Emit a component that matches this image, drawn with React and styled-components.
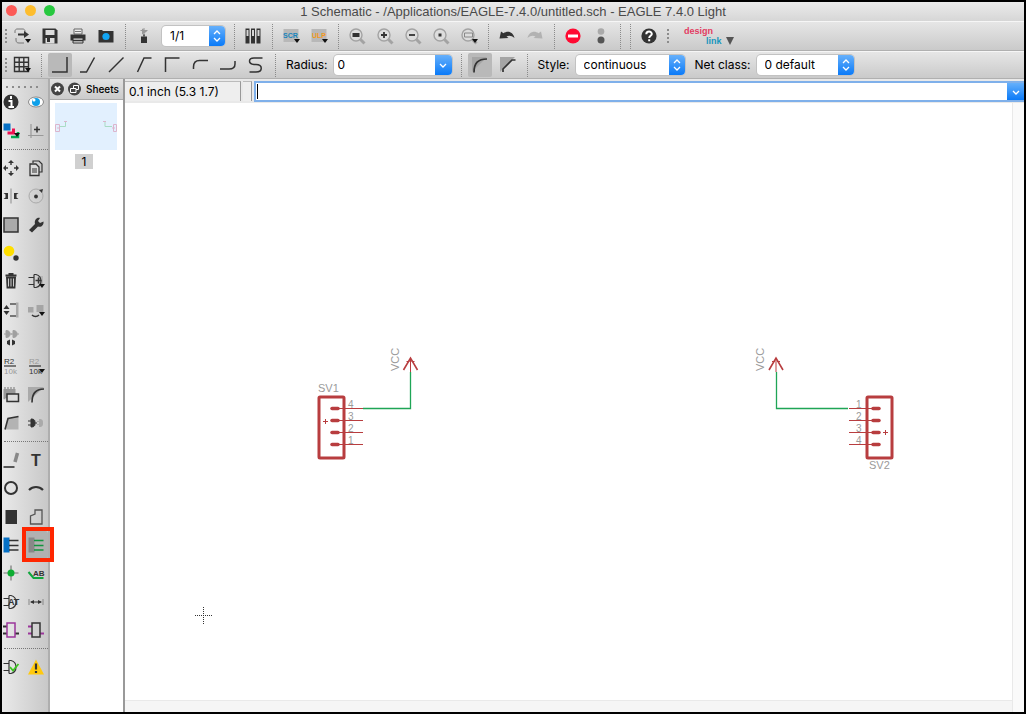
import React from "react";
import styled, { createGlobalStyle } from "styled-components";

const GlobalStyle = createGlobalStyle`
  *, *::before, *::after { box-sizing: border-box; }
  body { margin: 0; }
  button, input, select { font: inherit; color: inherit; }
`;

const ink = "#333";
const pale = "#a3a3a3";

/* ---------- frame ---------- */

const Window = styled.div`
  display: flex;
  flex-direction: column;
  height: 100vh;
  border: 2px solid #000;
  background: #fff;
  color: #000;
  font: 12px/16px Inter, "Liberation Sans", sans-serif;
  overflow: hidden;
`;

const TitleBar = styled.header`
  position: relative;
  display: flex;
  align-items: center;
  justify-content: center;
  flex: none;
  height: 19px;
  background: linear-gradient(#ebebeb, #d6d6d6);
`;

const Lights = styled.div`
  position: absolute;
  left: 4px;
  top: 3px;
  display: flex;
  gap: 8px;
`;

const Light = styled.button`
  width: 11px;
  height: 11px;
  padding: 0;
  border: 0;
  border-radius: 50%;
  background: ${(p) => p.$color};
`;

const Title = styled.h1`
  margin: 0;
  font-family: "Liberation Sans", sans-serif;
  font-size: 13px;
  line-height: 16px;
  font-weight: 400;
  color: #4a4a4a;
  white-space: nowrap;
`;

const Toolbar = styled.div`
  display: flex;
  align-items: center;
  flex: none;
  height: ${(p) => p.$height}px;
  border-top: 1px solid #f6f6f6;
  border-bottom: 1px solid #b0b0b0;
  background: linear-gradient(#e6e6e6, #cacaca);
`;

const Grip = styled.span`
  flex: none;
  width: 2px;
  height: 14px;
  margin: 0 ${(p) => p.$after}px 0 ${(p) => p.$before}px;
  background: repeating-linear-gradient(#8c8c8c 0 2px, transparent 2px 4px);
`;

const Divider = styled.span`
  flex: none;
  align-self: stretch;
  width: 1px;
  margin: 2px 4px 1px 5px;
  border-left: 1px dotted #8a8a8a;
`;

const ToolButton = styled.button`
  display: flex;
  align-items: center;
  justify-content: center;
  flex: none;
  width: 24px;
  height: 24px;
  margin: 0 2px;
  padding: 0;
  border: 0;
  border-radius: 2px;
  background: ${(p) => (p.$active ? "#b9b9b9" : "transparent")};
`;

const Field = styled.div`
  display: flex;
  flex: none;
  width: ${(p) => p.$width}px;
  height: 20px;
  margin: 0 4px;
  border-radius: 4px;
  overflow: hidden;
  background: #fff;
  box-shadow: 0 0 0 1px #c2c2c2;
`;

const Select = styled.select`
  appearance: none;
  flex: 1;
  min-width: 0;
  padding: 0 8px;
  border: 0;
  outline: 0;
  background: transparent;
`;

const TextInput = styled.input`
  flex: 1;
  min-width: 0;
  padding: 0 4px;
  border: 0;
  outline: 0;
  background: transparent;
`;

const Stepper = styled.span`
  display: flex;
  align-items: center;
  justify-content: center;
  flex: none;
  width: 16px;
  background: linear-gradient(#66b0fb, #0a7af8);
  pointer-events: none;
`;

const DropButton = styled.button`
  display: flex;
  align-items: center;
  justify-content: center;
  flex: none;
  width: 17px;
  padding: 0;
  border: 0;
  background: linear-gradient(#66b0fb, #0a7af8);
`;

const Label = styled.label`
  margin: 0 2px 0 6px;
  white-space: nowrap;
`;

const LogoLink = styled.a`
  display: flex;
  align-items: center;
  margin-left: 10px;
`;

/* ---------- body ---------- */

const Body = styled.div`
  display: flex;
  flex: 1;
  min-height: 0;
`;

const Palette = styled.nav`
  display: flex;
  flex-direction: column;
  flex: none;
  width: 48px;
  border-right: 2px solid #aeaeae;
  background: linear-gradient(90deg, #e9e9e9, #c8c8c8);
`;

const PaletteGrip = styled.span`
  height: 2px;
  margin: 7px 6px 0 4px;
  background: repeating-linear-gradient(90deg, #8c8c8c 0 2px, transparent 2px 6px);
`;

const PaletteRule = styled.hr`
  width: 44px;
  margin: 4px 0 4px 2px;
  border: 0;
  border-top: 1px dotted #777;
`;

const PaletteGroup = styled.div`
  display: grid;
  grid-template-columns: 18px 24px;
  grid-auto-rows: 1fr;
  column-gap: 4px;
  flex: none;
  height: ${(p) => p.$height}px;
`;

const PaletteButton = styled.button`
  position: relative;
  display: flex;
  align-items: center;
  justify-content: center;
  padding: 0;
  border: 0;
  border-radius: 3px;
  background: ${(p) => (p.$active ? "#b1b1b1" : "transparent")};
`;

const Highlight = styled.span`
  position: absolute;
  z-index: 2;
  inset: -4px -6px -3px -2px;
  border: 4px solid #ff2600;
`;

const Sheets = styled.aside`
  display: flex;
  flex-direction: column;
  flex: none;
  width: 75px;
  border-right: 2px solid #999;
  background: #fff;
`;

const SheetsHeader = styled.div`
  display: flex;
  align-items: center;
  gap: 3px;
  height: 21px;
  border-bottom: 1px solid #aaa;
  background: linear-gradient(#e2e2e2, #cbcbcb);
`;

const SheetsTitle = styled.h2`
  margin: 0 0 0 2px;
  font-size: 10px;
  line-height: 16px;
  font-weight: 500;
`;

const RoundButton = styled.button`
  display: flex;
  padding: 0;
  border: 0;
  background: transparent;
`;

const SheetItem = styled.button`
  display: flex;
  flex-direction: column;
  align-items: center;
  gap: 4px;
  margin: 3px 6px 0 5px;
  padding: 0;
  border: 0;
  background: transparent;
`;

const Thumb = styled.svg`
  display: block;
  width: 100%;
  height: 47px;
  background: #e2f0fe;
`;

const SheetNumber = styled.span`
  width: 18px;
  margin-right: 4px;
  background: #d0d0d0;
  line-height: 15px;
`;

const Main = styled.main`
  display: flex;
  flex-direction: column;
  flex: 1;
  min-width: 0;
`;

const CommandRow = styled.div`
  display: flex;
  flex: none;
  height: 24px;
  padding-top: 2px;
  background: #e9e9e9;
`;

const Coordinates = styled.output`
  width: ${(p) => p.$width}px;
  height: 20px;
  margin-right: 2px;
  padding: 2px 4px 0;
  border-top: 1px solid #bbb;
  border-right: 1px solid #999;
  background: #eee;
  white-space: nowrap;
`;

const CommandBox = styled.div`
  display: flex;
  flex: 1;
  min-width: 0;
  height: 21px;
  border: 2px solid #7fb0ea;
  border-right: 0;
  background: #fff;
`;

const Caret = styled.span`
  width: 1px;
  height: 15px;
  margin: 1px 0 0 1px;
  background: #000;
`;

const CanvasArea = styled.div`
  display: grid;
  grid-template-columns: 1fr 12px;
  grid-template-rows: 1fr 12px;
  flex: 1;
  min-height: 0;
`;

const Sheet = styled.svg`
  display: block;
  width: 100%;
  height: 100%;
  min-height: 0;
  background: #fff;
`;

const ScrollTrack = styled.div`
  border: 0 solid #e9e9e9;
  border-width: ${(p) => (p.$side ? "0 0 0 1px" : "1px 0 0")};
  background: ${(p) => (p.$side ? "#fafafa" : "#f5f5f5")};
`;

/* ---------- icons ---------- */

const Svg = ({ children, size = 18 }) => (
  <svg width={size} height={size} viewBox="0 0 18 18" fill="none" stroke={ink} strokeWidth="1.5" aria-hidden="true">
    {children}
  </svg>
);

const Tri = ({ x = 14, y = 14 }) => <path d={`M${x - 3} ${y - 2}h6l-3 4z`} fill="#111" stroke="none" />;

const Glyph = ({ x, y, size = 8, fill = ink, weight = 400, children }) => (
  <text x={x} y={y} fontSize={size} fill={fill} fontWeight={weight} stroke="none" fontFamily="'Liberation Sans', sans-serif">
    {children}
  </text>
);

const Lens = ({ children }) => (
  <>
    <path d="M12.5 12.5l4 4" stroke={pale} strokeWidth="3" />
    <circle cx="8" cy="8" r="6" fill="#ddd" stroke={pale} strokeWidth="1.4" />
    {children}
  </>
);

const Gate = () => <path d="M7 2.500v13M7 2.500h2c4 1 5 4 5 6.500s-1 5.500-5 6.500H7M1.500 5.500h5.500M1.500 12.500h5.500" strokeWidth="1.2" />;

const Plug = ({ x, y, flip, fill }) => (
  <path
    d={flip ? `M${x} ${y - 3.5}v7c3 0 4-1.500 4-3.500s-1-3.500-4-3.500z M${x + 4} ${y}h2 M${x - 2} ${y}h2` : `M${x} ${y - 3.5}v7c3 0 4-1.500 4-3.500s-1-3.500-4-3.500z M${x - 3} ${y - 2}h3 M${x - 3} ${y + 2}h3 M${x + 4} ${y}h2`}
    fill={fill}
    stroke={fill}
    strokeWidth="1"
  />
);

const icons = {
  open: (<><path d="M12 5V4c0-1-1-2-2-2H4C3 2 2 3 2 4v2M3 11v2c0 2 1 3 3 3h5" stroke="#777" strokeWidth="1" /><path d="M5 7.500h7" strokeWidth="2" /><path d="M11 4l5 3.500-5 3.500z" fill={ink} stroke="none" /><Tri x={15} y={14} /></>),
  save: (<><path d="M1.500 1.500h13l2 2v13h-15z" fill={ink} stroke="none" /><path d="M4.500 3h9v5h-9z" fill="#ddd" stroke="none" /><path d="M4.500 11h9v5.500h-9z" fill="#ddd" stroke="none" /><path d="M6 11h3v4H6z" fill={ink} stroke="none" /></>),
  print: (<><path d="M5 2h8v5H5z" fill="#eee" stroke="#666" strokeWidth="1" /><path d="M6 4.500h6" stroke="#777" strokeWidth="1" /><path d="M1.500 7.500h15v6h-15z" fill={ink} stroke="none" /><path d="M4 11h10v5H4z" fill="#ddd" stroke={ink} strokeWidth="1" /><path d="M4 13.500h10" strokeWidth="1.500" /></>),
  camera: (<><path d="M1.500 3h4v1h11v11.500h-15z" fill={ink} stroke="none" /><circle cx="9" cy="9.500" r="3.600" fill="#12a5f4" stroke="none" /></>),
  module: (<><path d="M9 1v7M5.500 3.500h7" stroke="#999" strokeWidth="1" /><path d="M7 1.500l5 3L7 7.500z" fill="#999" stroke="none" /><path d="M6 9.500h6V16H6z" fill={ink} stroke="none" /><path d="M9 7.500v2" /></>),
  library: (<>{[1.5, 7, 12.5].map((x) => (<g key={x}><path d={`M${x} 1.500h4v15h-4z`} fill={ink} stroke="none" /><path d={`M${x + 1} 3h2v6h-2z`} fill="#d5d5d5" stroke="none" /></g>))}</>),
  scr: (<><path d="M1.500 2h15v13h-15z" fill="#b8b8b8" stroke="none" /><Glyph x={1} y={11} size={7} weight={700} fill="#1684bd">SCR</Glyph><Tri x={15} y={14} /></>),
  ulp: (<><path d="M1.500 2h15v13h-15z" fill="#b8b8b8" stroke="none" /><Glyph x={2} y={11} size={7} weight={700} fill="#f49a1c">ULP</Glyph><Tri x={15} y={14} /></>),
  zoomFit: (<Lens><path d="M4.500 6h7v4h-7z" fill={ink} stroke="none" /></Lens>),
  zoomIn: (<Lens><path d="M5 8h6M8 5v6" strokeWidth="1.800" /></Lens>),
  zoomOut: (<Lens><path d="M5 8h6" strokeWidth="1.800" /></Lens>),
  zoomRedraw: (<Lens><path d="M6.500 6.500h3v3h-3z" fill={ink} stroke="none" /></Lens>),
  zoomSelect: (<Lens><path d="M4.500 6h8v4h-8z" stroke="#888" strokeWidth="1" /><Tri x={15} y={14} /></Lens>),
  undo: (<path d="M1.500 11.500L3 4.500l2.500 1.700c4-3 9.500-1.700 11 4.800-3-2.500-5.500-3-8-1.500l2 1.500z" fill={ink} stroke="none" />),
  redo: (<path d="M16.500 11.500L15 4.500l-2.500 1.700C8.500 3.200 3 4.500 1.500 11c3-2.500 5.500-3 8-1.500l-2 1.500z" fill="#b2b2b2" stroke="none" />),
  stop: (<><circle cx="9" cy="9" r="7.600" fill="#ff0a32" stroke="none" /><path d="M4 7.500h10v3H4z" fill="#fff" stroke="none" /></>),
  go: (<><circle cx="9" cy="4.500" r="3.300" fill="#aaa" stroke="none" /><circle cx="9" cy="13" r="3.500" fill="#555" stroke="none" /></>),
  help: (<><circle cx="9" cy="9" r="7.600" fill={ink} stroke="none" /><path d="M6.300 7.200c0-3.600 5.600-3.400 5.500-.2 0 1.800-2.600 1.900-2.600 4M9.200 12.300v2" stroke="#fff" strokeWidth="2" /></>),
  grid: (<><path d="M1.500 1.500h14v14h-14zM1.500 6.200h14M1.500 10.800h14M6.200 1.500v14M10.800 1.500v14" strokeWidth="1.400" /><Tri x={15} y={14} /></>),
  bend0: <path d="M1 16h15V1" />,
  bend1: <path d="M1 16h6.500L15.500 1.500" />,
  bend2: <path d="M2 16L16.500 1.500" />,
  bend3: <path d="M2.500 16L9 2h7.500" />,
  bend4: <path d="M2.500 16V2H16.500" />,
  bend5: <path d="M2.500 13V11c0-4 2-6.500 6-6.500h8.500" />,
  bend6: <path d="M1 13h9c4 0 6-2 6-5V5" />,
  bend7: <path d="M15.500 2H7c-6 0-6 6 0 6.500h2c7 0 7 7.500 0 7.500H2.500" />,
  miterRound: (<><path d="M1 1h15L1 16z" fill="#a5a5a5" stroke="none" /><path d="M3 16.500C3 7 7 3 16 3" strokeWidth="1.700" /></>),
  miterStraight: (<><path d="M1 1h15L1 16z" fill="#a5a5a5" stroke="none" /><path d="M4 16v-3L13 4h3.500" strokeWidth="1.700" /></>),

  info: (<><circle cx="9" cy="9" r="7.500" fill={ink} stroke="none" /><path d="M9 3v3M6.500 8h3v6M6.500 14h5.500" stroke="#fff" strokeWidth="2" /></>),
  show: (<><ellipse cx="9" cy="9" rx="7.500" ry="5" fill="#fff" stroke="#888" strokeWidth="1" /><circle cx="9" cy="9" r="4" fill="#0ea0ea" stroke="none" /><circle cx="7" cy="7" r="1.500" fill="#fff" stroke="none" /></>),
  layers: (<><path d="M1.500 1.500h7v7h-7z" fill="#0570c5" stroke="none" /><path d="M5.500 11h6V6.500" stroke="#ee1050" strokeWidth="3" /><path d="M9 15h7v-5" stroke="#00a850" strokeWidth="2.500" /><Tri x={15} y={13} /></>),
  mark: (<><path d="M4 2v14M1 13.500h15.500" stroke="#999" strokeWidth="1.200" /><path d="M7 7.500h6M10 4.500v6" /></>),
  move: (<g fill={ink} stroke="none"><path d="M9 1l3 3H6zM9 17l3-3H6zM1 9l3-3v6zM17 9l-3-3v6z" /><path d="M8.300 4h1.400v2H8.300zM8.300 12h1.400v2H8.300zM4 8.300h2v1.400H4zM12 8.300h2v1.400h-2z" /></g>),
  copy: (<><path d="M6 4V2h6l3 3v8h-3" strokeWidth="1.200" /><path d="M3 5h6l3 3v8.500H3z" fill="#ddd" strokeWidth="1.300" /><path d="M5 9h5v5H5z" fill="#888" stroke="none" /></>),
  mirror: (<><path d="M9 1.500v15" stroke="#999" strokeWidth="1.200" /><path d="M1.500 6h4.500v6H1.500l2-1.500v-3zM16.500 6H12v6h4.500l-2-1.500v-3z" fill={ink} stroke="none" /></>),
  rotate: (<><circle cx="9" cy="9" r="7" stroke="#aaa" strokeWidth="1" /><circle cx="9" cy="9.500" r="1.900" fill={ink} stroke="none" /><path d="M12 3l4-1-1 4z" fill={ink} stroke="none" /></>),
  group: <path d="M2 2h14v14H2z" fill="#aaa" />,
  change: <path d="M2 14l6-6c-1-4 2-7 5-6l-2 3 2 2 3.500-1.500c.5 4-2.500 6-5.500 5l-6 6z" fill={ink} stroke="none" />,
  paste: (<><circle cx="7" cy="7" r="5.300" fill="#ffdf00" stroke="none" /><circle cx="14" cy="14" r="2.700" fill={ink} stroke="none" /></>),
  trash: (<><path d="M4 4.500h10l-.6 12H4.600z" fill={ink} stroke="none" /><path d="M3.500 3.500h11M6.500 2h5" strokeWidth="1.800" /><path d="M6.500 6.500v8M9 6.500v8M11.500 6.500v8" stroke="#ccc" strokeWidth="1" /></>),
  add: (<><path d="M11 4h5v8h-5z" fill="#b6b6b6" stroke="none" /><Gate /><path d="M8.500 8.500h6M11.500 5.500v6" /><Tri x={15} y={14} /></>),
  pinswap: (<><path d="M14 1.500h2.500v15H14z" fill="#aaa" stroke="none" /><path d="M8 3h6M8 15h6" strokeWidth="2" stroke="#777" /><path d="M4.500 4l3 4h-6zM4.500 14l3-4h-6z" fill={ink} stroke="none" /></>),
  replace: (<><path d="M1 6h5.500v5.500H1zM9.500 4h7v7h-7z" fill="#a5a5a5" stroke="none" /><path d="M5 14c2 2 5 2 7 0" /><Tri x={15} y={13} /></>),
  gateswap: (<><Plug x={4} y={5} flip fill="#a0a0a0" /><Plug x={11} y={5} flip fill="#a0a0a0" /><path d="M8 10.500v6l-3-1.500v-3zM10 10.500v6l3-1.500v-3z" fill={ink} stroke="none" /></>),
  name: (<><Glyph x={2} y={7} size={8}>R2</Glyph><path d="M2 9h12" strokeWidth="1.200" /><Glyph x={2} y={17} size={8} fill="#999">10k</Glyph></>),
  value: (<><Glyph x={2} y={7} size={8} fill="#999">R2</Glyph><path d="M2 9h12" strokeWidth="1.200" /><Glyph x={2} y={17} size={8}>10k</Glyph><Tri x={15} y={14} /></>),
  smash: (<><path d="M1.500 3h12v9h-12z" fill="#999" stroke="none" /><path d="M2 2h11M1.500 12.500h4" stroke="#999" strokeDasharray="2 1" /><path d="M5 8h11.500v7.500H5z" fill="#ddd" /></>),
  miter: (<><path d="M1 1h16L1 16z" fill="#aaa" stroke="none" /><path d="M5 16.500C5 8 8 3 17 3" strokeWidth="1.600" /></>),
  split: (<><path d="M3.500 15.500L6 4.500l10.500-2v13z" fill="#b3b3b3" stroke="none" /><path d="M3 15.500L6 4.500l10.500-2" strokeWidth="1.600" /></>),
  invoke: (<><path d="M4 5v8c4 0 4-2 4-4s0-4-4-4zM1 7h3M1 11h3M8 9h2" fill={ink} strokeWidth="1" /><path d="M12 5v8c4 0 4-2 4-4s0-4-4-4zM10 7h2v1h-2zM10 10h2v1h-2z" fill="#aaa" stroke="none" /></>),
  wire: (<><path d="M1.500 16h11" strokeWidth="1.600" /><path d="M13 11l2.500-9" stroke="#888" strokeWidth="3.500" /></>),
  text: <Glyph x={4} y={15} size={16} weight={700}>T</Glyph>,
  circle: <circle cx="9" cy="9" r="6" strokeWidth="2" />,
  arc: <path d="M2 11c4-4 10-4 14 0" strokeWidth="2.200" />,
  rect: <path d="M3.500 2h11.500v14H3.500z" fill={ink} stroke="none" />,
  polygon: <path d="M3.500 16V8L8 6V2h7v14z" stroke="#555" strokeWidth="1.300" />,
  bus: (<><path d="M1.500 1.500h6v15h-6z" fill="#0570c5" stroke="none" /><path d="M7 4.500h9.500M7 9.500h9.500M7 14h9.500" /></>),
  net: (<><path d="M1.500 1.500h6v15h-6z" fill="#888" stroke="none" /><path d="M7 4.500h9.500M7 9.500h9.500M7 14h9.500" stroke="#12943e" /></>),
  junction: (<><path d="M9 1.500v15M1.500 9h15" stroke="#777" strokeWidth="1.200" /><circle cx="9" cy="9" r="3.500" fill="#0dad32" stroke="none" /></>),
  label: (<><path d="M1.500 8l5 6h10" stroke="#10a73d" strokeWidth="2" /><Glyph x={6} y={12} size={8} weight={700}>AB</Glyph></>),
  attribute: (<><Gate /><Glyph x={6} y={12} size={9} weight={700}>AT</Glyph></>),
  dimension: (<><path d="M2 6v6M16 6v6" stroke="#888" strokeWidth="1" /><path d="M4 9h10" strokeWidth="1" /><path d="M3 9l4-2v4zM15 9l-4-2v4z" fill={ink} stroke="none" /></>),
  device: (<><path d="M1 5.500h4M1 12.500h4M13 12.500h4" strokeWidth="2" /><path d="M5 2h8v14H5z" stroke="#9b369b" /></>),
  frame: (<><path d="M1 5.500h4M1 12.500h4M13 12.500h4" stroke="#9b369b" strokeWidth="2" /><path d="M5 2h8v14H5z" /></>),
  erc: (<><Gate /><path d="M8 9l3 3.500L16.500 6" stroke="#3dc520" strokeWidth="1.800" /></>),
  errors: (<><path d="M9 1.500L17 16.500H1z" fill="#ffc90d" stroke="none" /><path d="M9 5.500v6M9 13v2" strokeWidth="2.200" /></>),
};

const Tool = ({ name, label, active }) => (
  <ToolButton aria-label={label} $active={active}>
    <Svg>{icons[name]}</Svg>
  </ToolButton>
);

const PaletteTool = ({ name, marked }) => (
  <PaletteButton aria-label={name} $active={marked}>
    <Svg>{icons[name]}</Svg>
    {marked && <Highlight />}
  </PaletteButton>
);

const UpDown = () => (
  <svg width="10" height="14" viewBox="0 0 10 14" fill="none" stroke="#fff" strokeWidth="1.300" aria-hidden="true">
    <path d="M2 5l3-3 3 3M2 9l3 3 3-3" />
  </svg>
);

const Down = () => (
  <svg width="10" height="8" viewBox="0 0 10 8" fill="none" stroke="#fff" strokeWidth="1.300" aria-hidden="true">
    <path d="M2 3l3 3 3-3" />
  </svg>
);

const Picker = ({ id, label, width, value }) => (
  <Field $width={width}>
    <Select id={id} aria-label={label} defaultValue={value}>
      <option>{value}</option>
    </Select>
    <Stepper><UpDown /></Stepper>
  </Field>
);

const Logo = () => (
  <svg width="52" height="26" viewBox="0 0 52 26" aria-hidden="true">
    <g fontFamily="'Liberation Sans', sans-serif" fontSize="9" fontWeight="700">
      <text x="1" y="11" fill="#e23b62">design</text>
      <text x="23" y="21" fill="#1795bd">link</text>
    </g>
    <path d="M43 14h8l-4 8z" fill="#555" />
  </svg>
);

/* ---------- schematic ---------- */

const red = "#b83d3f";
const SchemText = ({ children, ...rest }) => (
  <text fill="#9a9a9a" fontFamily="'Liberation Sans', sans-serif" fontSize="11" {...rest}>{children}</text>
);

const Supply = ({ x }) => (
  <g stroke={red} fill="none">
    <path d={`M${x} 269V256`} strokeWidth="1" />
    <path d={`M${x - 7} 267L${x} 255L${x + 7} 267`} strokeWidth="1.600" />
    <path d={`M${x - 4} 258.500h3M${x + 1} 258.500h3`} strokeWidth="1" />
    <SchemText x={0} y={0} stroke="none" transform={`translate(${x - 12} 268) rotate(-90)`}>VCC</SchemText>
  </g>
);

const Connector = ({ x, flip, numbers, plusRow }) => (
  <g>
    <rect x={x} y="294" width="25" height="61" rx="1" fill="none" stroke={red} strokeWidth="3" />
    {numbers.map((n, i) => {
      const y = 305.5 + i * 12;
      return (
        <g key={n}>
          <path d={flip ? `M${x - 18} ${y}h26` : `M${x + 18} ${y}h26`} stroke={red} strokeWidth="1" />
          <path d={flip ? `M${x + 6} ${y}h6` : `M${x + 13} ${y}h6`} stroke={red} strokeWidth="3.500" strokeLinecap="round" />
          <SchemText x={flip ? x - 11 : x + 29} y={y - 1} fontSize={10}>{n}</SchemText>
        </g>
      );
    })}
    <path
      d={flip ? `M${x + 16} ${305.5 + plusRow * 12}h5M${x + 18.5} ${303 + plusRow * 12}v5` : `M${x + 4} ${306.5 + plusRow * 12}h5M${x + 6.5} ${304 + plusRow * 12}v5`}
      stroke={red}
    />
  </g>
);

const Schematic = () => (
  <Sheet role="img" aria-label="Schematic sheet 1">
    <g fill="none" stroke="#1fa556" strokeWidth="1.300">
      <path d="M238 305.500H285.500V269" />
      <path d="M723 305.500H651.500V269" />
    </g>
    <Supply x={285.5} />
    <Supply x={651} />
    <Connector x={194} numbers={[4, 3, 2, 1]} plusRow={1} />
    <Connector x={742} flip numbers={[1, 2, 3, 4]} plusRow={2} />
    <SchemText x={193} y={289}>SV1</SchemText>
    <SchemText x={744} y={366}>SV2</SchemText>
    <path d="M70 512.500h18M78.500 504v18" stroke="#333" strokeWidth="1" strokeDasharray="1 1" />
  </Sheet>
);

const paletteGroups = [
  { height: 57, tools: ["info", "show", "layers", "mark"] },
  { height: 283, tools: ["move", "copy", "mirror", "rotate", "group", "change", "paste", null, "trash", "add", "pinswap", "replace", "gateswap", null, "name", "value", "smash", "miter", "split", "invoke"] },
  { height: 198, tools: ["wire", "text", "circle", "arc", "rect", "polygon", "bus", "net", "junction", "label", "attribute", "dimension", "device", "frame"] },
  { height: 28, tools: ["erc", "errors"] },
];

export default function App() {
  return (
    <Window>
      <GlobalStyle />
      <TitleBar>
        <Lights>
          <Light aria-label="Close" $color="#fc5b57" />
          <Light aria-label="Minimize" $color="#fdbd2e" />
          <Light aria-label="Zoom" $color="#27c83f" />
        </Lights>
        <Title>1 Schematic - /Applications/EAGLE-7.4.0/untitled.sch - EAGLE 7.4.0 Light</Title>
      </TitleBar>

      <Toolbar $height={30}>
        <Grip $before={3} $after={1} />
        <Tool name="open" label="Open" />
        <Tool name="save" label="Save" />
        <Tool name="print" label="Print" />
        <Tool name="camera" label="CAM processor" />
        <Divider />
        <Tool name="module" label="Board" />
        <Picker label="Sheet" width={63} value="1/1" />
        <Divider />
        <Tool name="library" label="Library" />
        <Divider />
        <Tool name="scr" label="Run script" />
        <Tool name="ulp" label="Run ULP" />
        <Divider />
        <Tool name="zoomFit" label="Fit" />
        <Tool name="zoomIn" label="Zoom in" />
        <Tool name="zoomOut" label="Zoom out" />
        <Tool name="zoomRedraw" label="Redraw" />
        <Tool name="zoomSelect" label="Zoom to selection" />
        <Divider />
        <Tool name="undo" label="Undo" />
        <Tool name="redo" label="Redo" />
        <Divider />
        <Tool name="stop" label="Stop" />
        <Tool name="go" label="Go" />
        <Divider />
        <Divider />
        <Tool name="help" label="Help" />
        <Grip $before={4} $after={4} />
        <LogoLink href="#" aria-label="design link"><Logo /></LogoLink>
      </Toolbar>

      <Toolbar $height={28}>
        <Grip $before={3} $after={1} />
        <Tool name="grid" label="Grid" />
        <Divider />
        {[0, 1, 2, 3, 4, 5, 6, 7].map((n) => (
          <Tool key={n} name={`bend${n}`} label={`Wire bend ${n}`} active={n === 0} />
        ))}
        <Divider />
        <Label htmlFor="radius">Radius:</Label>
        <Field $width={118}>
          <TextInput id="radius" defaultValue="0" />
          <DropButton aria-label="Radius values"><Down /></DropButton>
        </Field>
        <Divider />
        <Tool name="miterRound" label="Round miter" active />
        <Tool name="miterStraight" label="Straight miter" />
        <Divider />
        <Label htmlFor="style">Style:</Label>
        <Picker id="style" width={109} value="continuous" />
        <Label htmlFor="netclass">Net class:</Label>
        <Picker id="netclass" width={97} value="0 default" />
      </Toolbar>

      <Body>
        <Palette aria-label="Tools">
          <PaletteGrip />
          {paletteGroups.map((group, g) => (
            <React.Fragment key={g}>
              {g > 0 && <PaletteRule />}
              <PaletteGroup $height={group.height}>
                {group.tools.map((name, i) =>
                  name ? <PaletteTool key={i} name={name} marked={name === "net"} /> : <span key={i} />
                )}
              </PaletteGroup>
            </React.Fragment>
          ))}
        </Palette>

        <Sheets>
          <SheetsHeader>
            <RoundButton aria-label="Close sheets">
              <svg width="14" height="14" viewBox="0 0 14 14" fill="none" stroke="#fff" strokeWidth="2"><circle cx="7.500" cy="7" r="6.500" fill="#444" stroke="none" /><path d="M5 4.500l5 5M10 4.500l-5 5" /></svg>
            </RoundButton>
            <RoundButton aria-label="Detach sheets">
              <svg width="14" height="14" viewBox="0 0 14 14" fill="none" stroke="#fff" strokeWidth="1"><circle cx="7.500" cy="7" r="6.500" fill="#444" stroke="none" /><path d="M6.500 6V3.500h5v4H9M3.500 6.500h5.500v4H3.500z" /></svg>
            </RoundButton>
            <SheetsTitle>Sheets</SheetsTitle>
          </SheetsHeader>
          <SheetItem>
            <Thumb viewBox="0 0 62 47" fill="none" aria-hidden="true">
              <path d="M5 23.500h5.500V19M57 23.500h-7V19" stroke="#a9dcc4" />
              <path d="M.5 21.500h4v7h-4zM58.500 21.500h3v7h-3zM2 25h3M57 25h3M9 18.500h3M48 18.500h3" stroke="#dcb5cc" />
            </Thumb>
            <SheetNumber>1</SheetNumber>
          </SheetItem>
        </Sheets>

        <Main>
          <CommandRow>
            <Coordinates $width={116}>0.1 inch (5.3 1.7)</Coordinates>
            <Coordinates $width={9} aria-label="Status" />
            <CommandBox>
              <Caret />
              <TextInput aria-label="Command" />
              <DropButton aria-label="Command history"><Down /></DropButton>
            </CommandBox>
          </CommandRow>
          <CanvasArea>
            <Schematic />
            <ScrollTrack $side />
            <ScrollTrack />
            <ScrollTrack $side />
          </CanvasArea>
        </Main>
      </Body>
    </Window>
  );
}
